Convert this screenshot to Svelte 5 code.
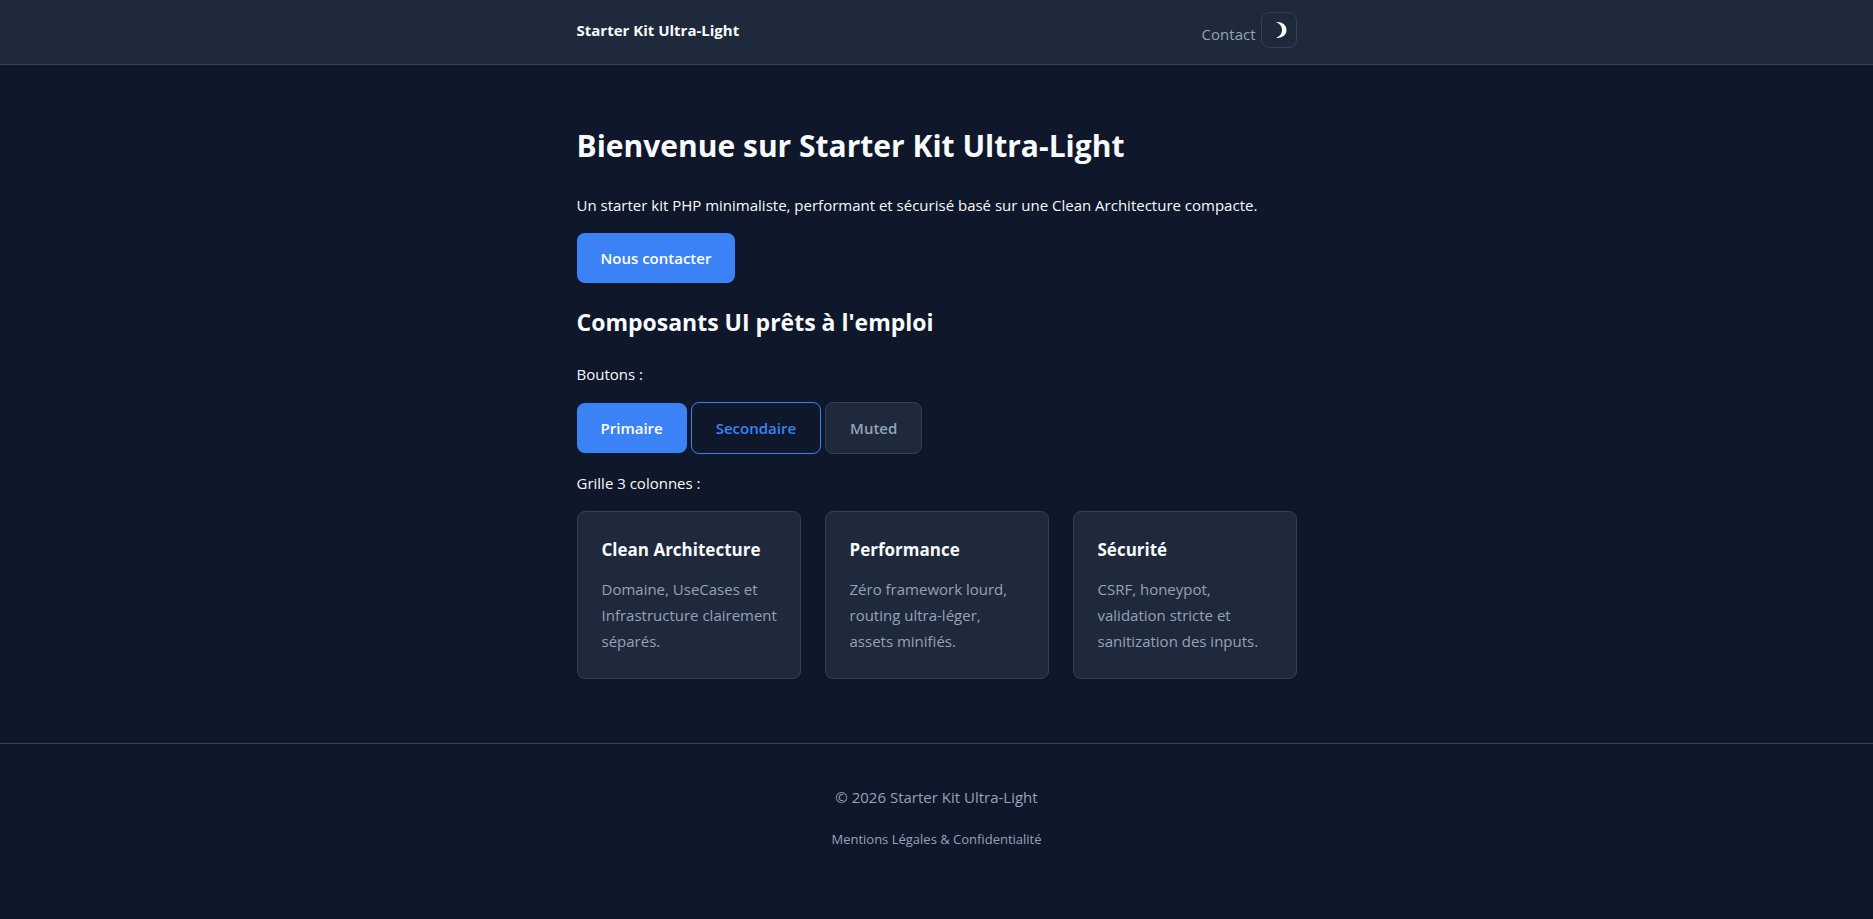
<script>
    let dark = true;

    const siteName = 'Starter Kit Ultra-Light';

    const buttons = [
        { label: 'Primaire', variant: 'primary' },
        { label: 'Secondaire', variant: 'secondary' },
        { label: 'Muted', variant: 'muted' }
    ];

    const cards = [
        { title: 'Clean Architecture', text: 'Domaine, UseCases et Infrastructure clairement séparés.' },
        { title: 'Performance', text: 'Zéro framework lourd, routing ultra-léger, assets minifiés.' },
        { title: 'Sécurité', text: 'CSRF, honeypot, validation stricte et sanitization des inputs.' }
    ];
</script>

<div class="page" class:light={!dark}>
    <header>
        <div class="container bar">
            <a class="brand" href="/">{siteName}</a>
            <nav>
                <a href="/contact">Contact</a>
                <button type="button" class="toggle" on:click={() => dark = !dark} aria-label="Changer de thème">
                    <svg viewBox="0 0 16 18" width="16" height="18" aria-hidden="true">
                        <path d="M5 1C11 .5 15.500 4 15.500 9S11 17.500 5 16.800C9 15.500 11 12.500 11 9S9 2.500 5 1Z" />
                    </svg>
                </button>
            </nav>
        </div>
    </header>

    <main class="container">
        <h1>Bienvenue sur {siteName}</h1>
        <p>Un starter kit PHP minimaliste, performant et sécurisé basé sur une Clean Architecture compacte.</p>
        <a class="btn primary" href="/contact">Nous contacter</a>

        <h2>Composants UI prêts à l'emploi</h2>
        <p>Boutons :</p>
        <div class="buttons">
            {#each buttons as button}
                <button type="button" class="btn {button.variant}">{button.label}</button>
            {/each}
        </div>

        <p>Grille 3 colonnes :</p>
        <div class="grid">
            {#each cards as card}
                <article class="card">
                    <h3>{card.title}</h3>
                    <p>{card.text}</p>
                </article>
            {/each}
        </div>
    </main>

    <footer>
        <p>© 2026 {siteName}</p>
        <a href="/mentions-legales">Mentions Légales &amp; Confidentialité</a>
    </footer>
</div>

<style>
    :global(body) {
        background: #0f172a;
    }
    .page {
        --bg: #0f172a;
        --surface: #1e293b;
        --border: #334155;
        --text: #f8fafc;
        --muted: #94a3b8;
        --primary: #3b82f6;
        min-height: 100vh;
        background: var(--bg);
        color: var(--text);
        font-family: "Segoe UI", "Open Sans", sans-serif;
        font-size: 15px;
        line-height: 26px;
    }
    .page.light {
        --bg: #ffffff;
        --surface: #f8fafc;
        --border: #e2e8f0;
        --text: #0f172a;
        --muted: #64748b;
    }
    .container {
        box-sizing: border-box;
        max-width: 768px;
        margin: 0 auto;
        padding: 0 24px;
    }
    a {
        text-decoration: none;
    }
    header {
        background: var(--surface);
        border-bottom: 1px solid var(--border);
    }
    .bar {
        display: flex;
        align-items: center;
        justify-content: space-between;
        padding-top: 12px;
        padding-bottom: 16px;
    }
    .brand {
        color: var(--text);
        font-weight: 700;
    }
    nav {
        display: flex;
        align-items: flex-end;
        gap: 5px;
        line-height: 28px;
    }
    nav a {
        color: var(--muted);
    }
    .toggle {
        display: flex;
        align-items: center;
        justify-content: center;
        width: 36px;
        height: 36px;
        padding: 0;
        background: none;
        border: 1px solid var(--border);
        border-radius: 8px;
        color: var(--text);
        cursor: pointer;
    }
    .toggle svg {
        fill: currentColor;
    }
    main.container {
        padding-top: 56px;
        padding-bottom: 64px;
    }
    h1 {
        margin: 0 0 21px;
        font-size: 30px;
        line-height: 50px;
    }
    h2 {
        margin: 20px 0;
        font-size: 23px;
        line-height: 38px;
    }
    p {
        margin: 0 0 15px;
    }
    .btn {
        display: inline-block;
        padding: 12px 24px;
        border: 0;
        border-radius: 8px;
        font: inherit;
        font-weight: 600;
        cursor: pointer;
    }
    .primary {
        background: var(--primary);
        color: #ffffff;
    }
    .secondary {
        background: transparent;
        border: 1px solid var(--primary);
        color: var(--primary);
    }
    .muted {
        background: var(--surface);
        border: 1px solid var(--border);
        color: var(--muted);
    }
    .buttons {
        display: flex;
        align-items: center;
        gap: 4px;
        margin-bottom: 16px;
    }
    .grid {
        display: grid;
        grid-template-columns: repeat(3, 1fr);
        gap: 24px;
    }
    .card {
        padding: 24px 20px 24px 24px;
        background: var(--surface);
        border: 1px solid var(--border);
        border-radius: 8px;
    }
    .card h3 {
        margin: 0 0 12px;
        font-size: 17px;
        line-height: 28px;
    }
    .card p {
        margin: 0;
        color: var(--muted);
    }
    footer {
        padding: 40px 24px;
        border-top: 1px solid var(--border);
        color: var(--muted);
        text-align: center;
    }
    footer a {
        color: var(--muted);
        font-size: 13px;
    }
    @media (max-width: 640px) {
        .grid {
            grid-template-columns: 1fr;
        }
    }
</style>
